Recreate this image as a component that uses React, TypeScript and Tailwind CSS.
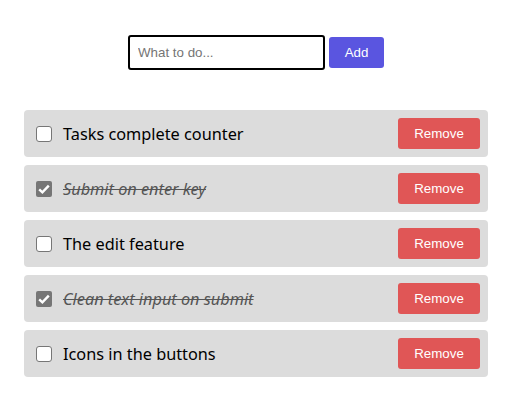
import React from "react";

const tasks = [
  { text: "Tasks complete counter", done: false },
  { text: "Submit on enter key", done: true },
  { text: "The edit feature", done: false },
  { text: "Clean text input on submit", done: true },
  { text: "Icons in the buttons", done: false },
];

export default function App() {
  return (
    <div className="w-[512px] h-[400px] bg-white px-6 pt-[35px] font-['Noto_Sans',sans-serif]">
      <div className="flex justify-center items-center gap-1">
        <input
          className="w-[197px] h-[35px] border-2 border-black rounded-[3px] px-2 text-[13.33px] font-['Liberation_Sans',sans-serif] outline-none placeholder:text-[#757575]"
          placeholder="What to do..."
        />
        <button className="w-[55px] h-[31px] bg-[#5a55e0] text-white rounded-[3px] text-[13.33px] font-['Liberation_Sans',sans-serif]">
          Add
        </button>
      </div>
      <div className="mt-[40px] flex flex-col gap-2">
        {tasks.map((t) => (
          <div
            key={t.text}
            className="h-[47px] bg-[#dcdcdc] rounded-[4px] flex items-center pl-3 pr-2"
          >
            {t.done ? (
              <span className="w-4 h-4 rounded-[2px] bg-[#767676] flex items-center justify-center">
                <svg width="16" height="16" viewBox="0 0 16 16">
                  <path d="M3.2 8.4 L6.4 11.4 L12.8 4.6" fill="none" stroke="white" strokeWidth="2.4" />
                </svg>
              </span>
            ) : (
              <span className="w-4 h-4 rounded-[3px] bg-white border border-[#767676]" />
            )}
            <span
              className={
                "ml-[11px] pt-[2px] flex-1 text-[16.3px] " +
                (t.done ? "italic line-through text-[#555]" : "text-black")
              }
            >
              {t.text}
            </span>
            <button className="w-[82px] h-[31px] bg-[#e05656] text-white rounded-[3px] text-[13.33px] font-['Liberation_Sans',sans-serif]">
              Remove
            </button>
          </div>
        ))}
      </div>
    </div>
  );
}
